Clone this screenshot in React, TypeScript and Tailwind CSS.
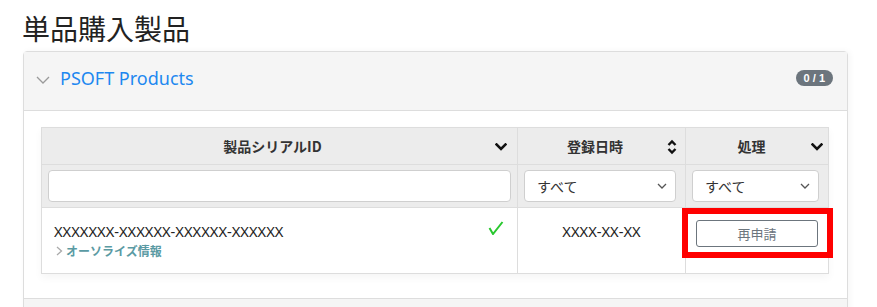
import React from "react";

const Chev = ({ className = "" }: { className?: string }) => (
  <svg width="12" height="8" viewBox="0 0 12 8" className={className}>
    <path d="M1.5 1.5 L6 6 L10.5 1.5" fill="none" stroke="#111" strokeWidth="2.6" strokeLinecap="square" />
  </svg>
);

const SortIcon = () => (
  <svg width="10" height="16" viewBox="0 0 10 16">
    <path d="M1.5 6 L5 2.5 L8.5 6" fill="none" stroke="#111" strokeWidth="2.4" />
    <path d="M1.5 10 L5 13.5 L8.5 10" fill="none" stroke="#111" strokeWidth="2.4" />
  </svg>
);

const SelChev = () => (
  <svg width="10" height="6" viewBox="0 0 10 6">
    <path d="M1 1 L5 5 L9 1" fill="none" stroke="#555" strokeWidth="1.3" />
  </svg>
);

const Select = () => (
  <div className="h-[32px] w-full rounded-[4px] border border-[#cfcfcf] bg-white flex items-center justify-between pl-[12px] pr-[8px] text-[14px] text-[#333]">
    <span>すべて</span>
    <SelChev />
  </div>
);

export default function App() {
  return (
    <div
      className="w-[877px] h-[307px] bg-white overflow-hidden"
      style={{ fontFamily: '"Noto Sans", "Noto Sans CJK JP", sans-serif' }}
    >
      <div className="h-[51px] pl-[22px] pt-[10px] text-[28px] leading-[36px] text-[#222]" style={{ fontFamily: '"Noto Sans CJK JP", sans-serif' }}>
        単品購入製品
      </div>
      <div className="ml-[23px] w-[825px] border border-[#dddddd] rounded-t-[4px] shadow-[2px_0_6px_rgba(0,0,0,0.04)]">
        <div className="h-[59px] bg-[#f5f5f5] border-b border-[#dddddd] flex items-center pl-[12px] pr-[14px] pb-[6px]">
          <svg width="14" height="8" viewBox="0 0 14 8" className="mt-[3px]">
            <path d="M1 1 L7 7 L13 1" fill="none" stroke="#9a9a9a" strokeWidth="1.3" />
          </svg>
          <span className="ml-[10px] text-[18px] text-[#1e88f0] leading-[24px]">PSOFT Products</span>
          <span className="ml-auto h-[16px] px-[8px] rounded-full bg-[#6c757d] text-white text-[11px] font-bold leading-[16px]" style={{ fontFamily: '"Liberation Sans", sans-serif' }}>
            0 / 1
          </span>
        </div>
        <div className="bg-white pt-[16px] pl-[17px] pb-[24px]">
          <div
            className="w-[788px] border border-[#dddddd] grid grid-cols-[476px_168px_142px] shadow-[0_4px_8px_rgba(0,0,0,0.04)]"
            style={{ fontFamily: '"Noto Sans CJK JP", sans-serif' }}
          >
            {/* header */}
            <div className="h-[37px] bg-[#ececec] border-r border-b border-[#dddddd] relative flex items-center justify-center pr-[14px] text-[14px] font-bold text-[#333]">
              製品シリアルID
              <Chev className="absolute right-[10px] top-[15px]" />
            </div>
            <div className="h-[37px] bg-[#ececec] border-r border-b border-[#dddddd] relative flex items-center justify-center pr-[13px] text-[14px] font-bold text-[#333]">
              登録日時
              <div className="absolute right-[8px] top-[11px]"><SortIcon /></div>
            </div>
            <div className="h-[37px] bg-[#ececec] border-b border-[#dddddd] relative flex items-center justify-center pr-[11px] text-[14px] font-bold text-[#333]">
              処理
              <Chev className="absolute right-[5px] top-[15px]" />
            </div>
            {/* filter row */}
            <div className="h-[43px] bg-[#ececec] border-r border-b border-[#dddddd] flex items-center px-[6px]">
              <div className="h-[32px] w-full rounded-[4px] border border-[#cfcfcf] bg-white" />
            </div>
            <div className="h-[43px] bg-[#ececec] border-r border-b border-[#dddddd] flex items-center pl-[6px] pr-[9px]">
              <Select />
            </div>
            <div className="h-[43px] bg-[#ececec] border-b border-[#dddddd] flex items-center pl-[6px] pr-[9px]">
              <Select />
            </div>
            {/* data row */}
            <div className="h-[65px] border-r border-[#dddddd] relative pl-[12px] pt-[13px]">
              <div className="text-[14.7px] leading-[21px] text-[#222]" style={{ fontFamily: '"Noto Sans", sans-serif' }}>
                XXXXXXX-XXXXXX-XXXXXX-XXXXXX
              </div>
              <div className="flex items-center">
                <svg width="7" height="10" viewBox="0 0 7 10" className="ml-[2px]">
                  <path d="M1 1 L5.5 5 L1 9" fill="none" stroke="#aaaaaa" strokeWidth="1.3" />
                </svg>
                <span className="ml-[3px] text-[12px] font-bold text-[#5a9aa3] leading-[18px]">オーソライズ情報</span>
              </div>
              <svg width="16" height="14" viewBox="0 0 16 14" className="absolute left-[446px] top-[13px]">
                <path d="M1.5 7 L5 13 L14.5 1" fill="none" stroke="#29c82f" strokeWidth="2" />
              </svg>
            </div>
            <div className="h-[65px] border-r border-[#dddddd] flex justify-center pt-[13px] text-[14.7px] leading-[21px] text-[#222]" style={{ fontFamily: '"Noto Sans", sans-serif' }}>
              XXXX-XX-XX
            </div>
            <div className="h-[65px] relative px-[10px] pt-[12px]">
              <div className="h-[27px] w-full rounded-[3px] border border-[#6c757d] flex items-center justify-center text-[13px] text-[#6c757d]">
                再申請
              </div>
              <div className="absolute left-[-4px] top-[0px] w-[151px] h-[50px] border-[6px] border-[#ff0000]" />
            </div>
          </div>
        </div>
        <div className="h-[20px] bg-[#f5f5f5] border-t border-[#dddddd]" />
      </div>
    </div>
  );
}
